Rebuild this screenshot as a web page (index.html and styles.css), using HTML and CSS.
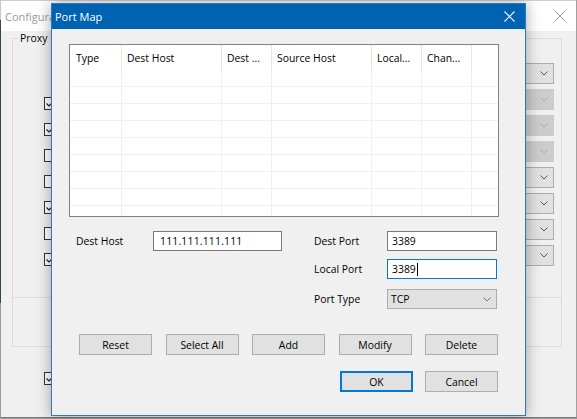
FILE: index.html
```html
<!DOCTYPE html>
<html>
<head>
<meta charset="utf-8">
<title>Port Map</title>
<link rel="stylesheet" href="styles.css">
</head>
<body>
<div class="screen">
  <div class="bgwin">
    <div class="bgtitle">
      <span class="bgtitle-text">Configuration</span>
      <svg class="bgclose" width="12" height="12" viewBox="0 0 12 12"><path d="M0.5 0.5 L11.5 11.5 M11.5 0.5 L0.5 11.5" stroke="#9a9a9a" stroke-width="1" fill="none"/></svg>
    </div>
    <fieldset class="group">
      <legend class="group-legend">Proxy</legend>
      <div class="group-inner">
        <div class="checks">
          <span class="cb"><svg width="11" height="11" viewBox="0 0 11 11"><path d="M1.5 5.5 L4 8 L9.5 2.5" stroke="#222" stroke-width="1.2" fill="none"/></svg></span>
          <span class="cb"><svg width="11" height="11" viewBox="0 0 11 11"><path d="M1.5 5.5 L4 8 L9.5 2.5" stroke="#222" stroke-width="1.2" fill="none"/></svg></span>
          <span class="cb"></span>
          <span class="cb"></span>
          <span class="cb"><svg width="11" height="11" viewBox="0 0 11 11"><path d="M1.5 5.5 L4 8 L9.5 2.5" stroke="#222" stroke-width="1.2" fill="none"/></svg></span>
          <span class="cb"></span>
          <span class="cb"><svg width="11" height="11" viewBox="0 0 11 11"><path d="M1.5 5.5 L4 8 L9.5 2.5" stroke="#222" stroke-width="1.2" fill="none"/></svg></span>
        </div>
        <div class="combos">
          <div class="bcombo"><svg width="8" height="5" viewBox="0 0 8 5"><path d="M0.5 0.5 L4 4 L7.5 0.5" stroke="#555" fill="none"/></svg></div>
          <div class="bcombo disabled"><svg width="8" height="5" viewBox="0 0 8 5"><path d="M0.5 0.5 L4 4 L7.5 0.5" stroke="#aaa" fill="none"/></svg></div>
          <div class="bcombo disabled"><svg width="8" height="5" viewBox="0 0 8 5"><path d="M0.5 0.5 L4 4 L7.5 0.5" stroke="#aaa" fill="none"/></svg></div>
          <div class="bcombo disabled"><svg width="8" height="5" viewBox="0 0 8 5"><path d="M0.5 0.5 L4 4 L7.5 0.5" stroke="#aaa" fill="none"/></svg></div>
          <div class="bcombo"><svg width="8" height="5" viewBox="0 0 8 5"><path d="M0.5 0.5 L4 4 L7.5 0.5" stroke="#555" fill="none"/></svg></div>
          <div class="bcombo"><svg width="8" height="5" viewBox="0 0 8 5"><path d="M0.5 0.5 L4 4 L7.5 0.5" stroke="#555" fill="none"/></svg></div>
          <div class="bcombo"><svg width="8" height="5" viewBox="0 0 8 5"><path d="M0.5 0.5 L4 4 L7.5 0.5" stroke="#555" fill="none"/></svg></div>
          <div class="bcombo"><svg width="8" height="5" viewBox="0 0 8 5"><path d="M0.5 0.5 L4 4 L7.5 0.5" stroke="#555" fill="none"/></svg></div>
        </div>
      </div>
    </fieldset>
    <div class="panel"></div>
    <div class="bottomrow">
      <span class="cb"><svg width="11" height="11" viewBox="0 0 11 11"><path d="M1.5 5.5 L4 8 L9.5 2.5" stroke="#222" stroke-width="1.2" fill="none"/></svg></span>
    </div>
  </div>

  <div class="dialog">
    <div class="dlg-title">
      <span class="dlg-title-text">Port Map</span>
      <svg class="dlg-close" width="11" height="11" viewBox="0 0 11 11"><path d="M0.5 0.5 L10.5 10.5 M10.5 0.5 L0.5 10.5" stroke="#fff" stroke-width="1.1" fill="none"/></svg>
    </div>
    <div class="dlg-body">
      <div class="lv">
        <div class="lv-head">
          <div class="lv-h c-type">Type</div>
          <div class="lv-h c-wide">Dest Host</div>
          <div class="lv-h c-narrow">Dest ...</div>
          <div class="lv-h c-wide">Source Host</div>
          <div class="lv-h c-narrow">Local...</div>
          <div class="lv-h c-narrow">Chan...</div>
        </div>
        <div class="lv-body">
          <div class="lv-col c-type"></div>
          <div class="lv-col c-wide"></div>
          <div class="lv-col c-narrow"></div>
          <div class="lv-col c-wide"></div>
          <div class="lv-col c-narrow"></div>
          <div class="lv-col c-narrow"></div>
        </div>
      </div>

      <div class="form">
        <div class="form-left">
          <span class="lbl lbl-host">Dest Host</span>
          <div class="field field-ip">111.111.111.111</div>
        </div>
        <div class="form-right">
          <div class="frow">
            <span class="lbl lbl-r">Dest Port</span>
            <div class="field field-r">3389</div>
          </div>
          <div class="frow frow-2">
            <span class="lbl lbl-r">Local Port</span>
            <div class="field field-r focused">3389<span class="caret"></span></div>
          </div>
          <div class="frow frow-3">
            <span class="lbl lbl-r">Port Type</span>
            <div class="select">
              <span>TCP</span>
              <svg width="8" height="5" viewBox="0 0 8 5"><path d="M0.5 0.5 L4 4 L7.5 0.5" stroke="#777" fill="none"/></svg>
            </div>
          </div>
        </div>
      </div>

      <div class="btnrow">
        <button class="btn">Reset</button>
        <button class="btn">Select All</button>
        <button class="btn">Add</button>
        <button class="btn">Modify</button>
        <button class="btn">Delete</button>
      </div>
      <div class="btnrow btnrow-end">
        <button class="btn btn-default">OK</button>
        <button class="btn">Cancel</button>
      </div>
    </div>
  </div>
</div>
</body>
</html>
```

FILE: styles.css
```css
html, body {
  margin: 0;
  padding: 0;
}

body {
  width: 577px;
  height: 419px;
  overflow: hidden;
  font-family: "Open Sans", "Noto Sans", sans-serif;
  font-size: 10.4px;
  color: #000;
  background: linear-gradient(to bottom, #c8c8c8 0 20px, #2f4d3e 20px 303px, #9a9a9a 303px);
}

.screen {
  position: relative;
  width: 577px;
  height: 419px;
}

/* background (inactive) window */
.bgwin {
  margin-left: 1px;
  width: 575px;
  height: 417px;
  background: #f0f0f0;
  border-right: 1px solid #a0a0a0;
  border-bottom: 1px solid #7a7a7a;
}

.bgtitle {
  height: 30px;
  background: #ffffff;
  border-top: 1px solid #cfcfcf;
  display: flex;
  align-items: center;
  justify-content: space-between;
  padding: 0 10px 0 4px;
  font-size: 11px;
  color: #9a9a9a;
}

.group {
  margin: 0 0 0 11px;
  padding: 0;
  width: 550px;
  box-sizing: border-box;
  border: 1px solid #dcdcdc;
  border-bottom: none;
}

.group-legend {
  margin-left: 5px;
  padding: 0 2px;
  line-height: 14px;
}

.group-inner {
  height: 252px;
  display: flex;
  justify-content: space-between;
}

.checks {
  margin-left: 31px;
  padding-top: 52px;
  display: flex;
  flex-direction: column;
  gap: 13px;
}

.cb {
  width: 13px;
  height: 13px;
  box-sizing: border-box;
  border: 1px solid #333;
  background: #fff;
  display: flex;
  align-items: center;
  justify-content: center;
}

.combos {
  margin-right: 7px;
  padding-top: 18px;
  display: flex;
  flex-direction: column;
  gap: 5px;
}

.bcombo {
  width: 160px;
  height: 21px;
  box-sizing: border-box;
  border: 1px solid #adadad;
  background: #e1e1e1;
  display: flex;
  align-items: center;
  justify-content: flex-end;
  padding-right: 5px;
}

.bcombo.disabled {
  background: #cccccc;
  border-color: #cccccc;
}

.panel {
  margin-left: 11px;
  width: 550px;
  height: 50px;
  box-sizing: border-box;
  border: 1px solid #dcdcdc;
}

.bottomrow {
  padding: 25px 0 0 43px;
  display: flex;
}

/* dialog */
.dialog {
  position: absolute;
  left: 51px;
  top: 3px;
  width: 475px;
  height: 413px;
  box-sizing: border-box;
  border: 1px solid #2b79c2;
  background: #f0f0f0;
  box-shadow: 0 0 14px rgba(0, 0, 0, 0.35);
  display: flex;
  flex-direction: column;
}

.dlg-title {
  height: 25px;
  background: #0063b1;
  color: #fff;
  font-size: 11px;
  display: flex;
  align-items: center;
  justify-content: space-between;
  padding: 0 10px 0 3px;
}

.dlg-body {
  padding: 15px 26px 0 17px;
}

.lv {
  width: 430px;
  height: 173px;
  box-sizing: border-box;
  border: 1px solid #828282;
  background: #fff;
  display: flex;
  flex-direction: column;
}

.lv-head {
  height: 25px;
  display: flex;
  flex: none;
}

.lv-h {
  box-sizing: border-box;
  border-right: 1px solid #e5e5e5;
  padding-left: 5px;
  display: flex;
  align-items: center;
  white-space: nowrap;
  overflow: hidden;
}

.lv-h.c-type {
  padding-left: 6px;
}

.c-type { width: 52px; }
.c-wide { width: 100px; }
.c-narrow { width: 50px; }

.lv-body {
  flex: 1;
  display: flex;
  background: repeating-linear-gradient(to bottom, transparent 0 16px, #f0f0f0 16px 17px);
}

.lv-col {
  box-sizing: border-box;
  border-right: 1px solid #f0f0f0;
}

.form {
  margin-top: 14px;
  padding-left: 7px;
  display: flex;
}

.form-left {
  width: 238px;
  display: flex;
  align-items: center;
  height: 20px;
}

.lbl-host {
  width: 77px;
}

.field {
  height: 20px;
  box-sizing: border-box;
  border: 1px solid #7a7a7a;
  background: #fff;
  display: flex;
  align-items: center;
}

.field-ip {
  width: 129px;
  padding-left: 6px;
  letter-spacing: 0.2px;
}

.form-right {
  display: flex;
  flex-direction: column;
}

.frow {
  display: flex;
  align-items: center;
}

.frow-2 {
  margin-top: 8px;
}

.frow-3 {
  margin-top: 10px;
}

.lbl-r {
  width: 73px;
}

.field-r {
  width: 110px;
  padding-left: 4px;
}

.field.focused {
  border-color: #0078d7;
}

.caret {
  display: inline-block;
  width: 1px;
  height: 13px;
  background: #000;
  margin-left: 1px;
}

.select {
  width: 110px;
  height: 20px;
  box-sizing: border-box;
  border: 1px solid #adadad;
  background: #e1e1e1;
  display: flex;
  align-items: center;
  justify-content: space-between;
  padding: 0 5px 0 3px;
}

.btnrow {
  margin-top: 25px;
  padding: 0 1px 0 10px;
  display: flex;
  justify-content: space-between;
}

.btnrow-end {
  margin-top: 16px;
  justify-content: flex-end;
  gap: 12px;
}

.btn {
  width: 73px;
  height: 21px;
  box-sizing: border-box;
  margin: 0;
  padding: 0;
  border: 1px solid #adadad;
  background: #e1e1e1;
  font: inherit;
  color: #000;
  display: flex;
  align-items: center;
  justify-content: center;
}

.btn-default {
  border: 2px solid #0078d7;
}
```
